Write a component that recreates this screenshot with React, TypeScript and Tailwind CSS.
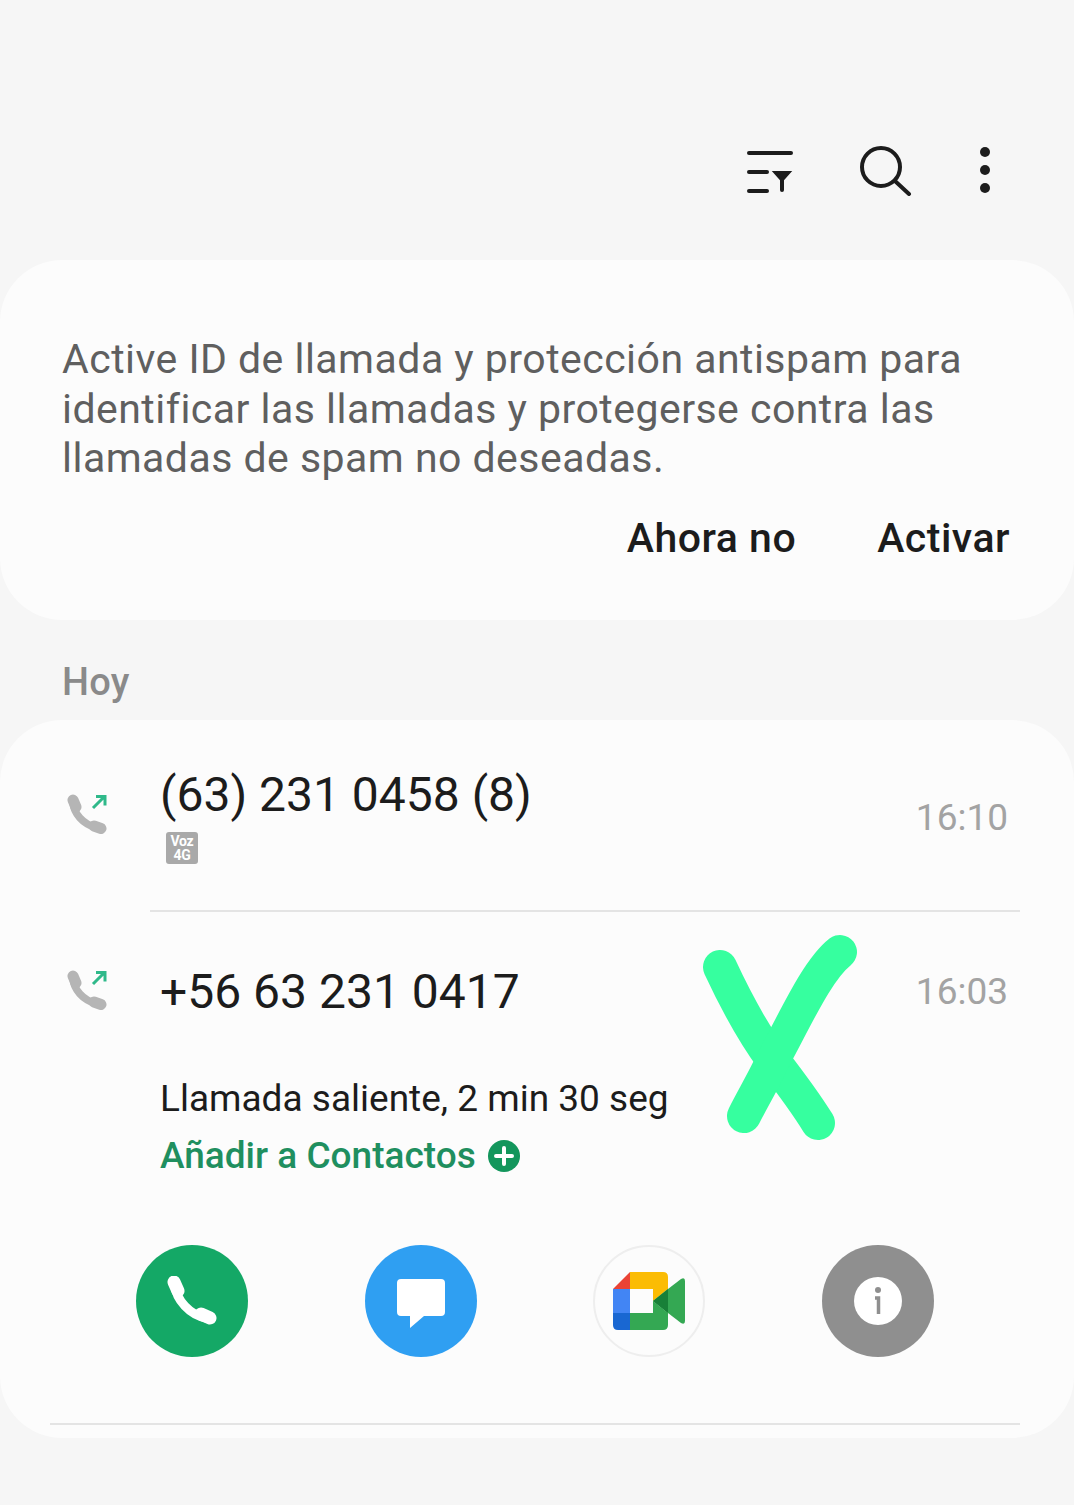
import React from 'react';

function CallOutIcon() {
  return (
    <svg width="42" height="42" viewBox="0 0 42 42" fill="none" className="shrink-0">
      <g stroke="#b5b5b5" strokeLinecap="round">
        <path d="M7 10C8 20 16 31 31 35" strokeWidth="7.500" />
        <path d="M7 7L10 14" strokeWidth="11" />
        <path d="M28 33L35 35.500" strokeWidth="11" />
      </g>
      <path d="M27 15L38 4M30 3.500H39V12.500" stroke="#2fb98a" strokeWidth="3" />
    </svg>
  );
}

function PhoneGlyph() {
  return (
    <svg width="50" height="50" viewBox="0 0 50 50" fill="none" stroke="#fff" strokeLinecap="round">
      <path d="M8 9C9 24 23 39 39 42" strokeWidth="9" />
      <path d="M7 6L11 15" strokeWidth="13" />
      <path d="M34 38L43 42" strokeWidth="13" />
    </svg>
  );
}

function MeetLogo() {
  return (
    <svg width="72" height="58" viewBox="0 0 72 58">
      <path d="M17 0L0 17H17Z" fill="#ea4335" />
      <path d="M0 17H17V41H0Z" fill="#4285f4" />
      <path d="M0 41H17V58H5Q0 58 0 53Z" fill="#1967d2" />
      <path d="M17 41H40V29L55 41V53Q55 58 50 58H17Z" fill="#34a853" />
      <path d="M17 0H50Q55 0 55 5V17L40 29V17H17Z" fill="#fbbc04" />
      <path d="M55 17L68 7Q72 5 72 9V49Q72 53 68 51L55 41L40 29Z" fill="#34a853" />
      <path d="M40 29L55 17V41Z" fill="#188038" />
    </svg>
  );
}

export default function App() {
  return (
    <div className="h-[1505px] w-[1074px] overflow-hidden bg-[#f6f6f6] font-['Roboto',sans-serif]">
      <div className="flex h-[260px] items-start justify-end pt-[146px] pr-[84px]">
        <svg width="46" height="44" viewBox="0 0 46 44" fill="none" stroke="#1c1c1c" strokeWidth="4" strokeLinecap="round" className="mt-[4px] mr-[67px]">
          <path d="M2 3H44" />
          <path d="M2 22H20" />
          <path d="M2 41H20" />
          <path d="M35 26V40" />
          <path d="M27 22H43L35 31Z" fill="#1c1c1c" strokeWidth="2" />
        </svg>
        <svg width="52" height="50" viewBox="0 0 52 50" fill="none" stroke="#1c1c1c" strokeWidth="4" strokeLinecap="round" className="mr-[68px]">
          <circle cx="21" cy="21" r="19" />
          <path d="M35 35L49 48" />
        </svg>
        <div className="mt-[1px] flex h-[46px] flex-col justify-between">
          <div className="size-[10px] rounded-full bg-[#1c1c1c]" />
          <div className="size-[10px] rounded-full bg-[#1c1c1c]" />
          <div className="size-[10px] rounded-full bg-[#1c1c1c]" />
        </div>
      </div>

      <section className="h-[360px] rounded-[62px] bg-[#fcfcfc] pt-[75px] pl-[62px] pr-[64px]">
        <p className="text-[41px] leading-[49.500px] tracking-[0.47px] text-[#5f5f5f]">
          Active ID de llamada y protección antispam para identificar las llamadas y protegerse contra las llamadas de spam no deseadas.
        </p>
        <div className="mt-[31px] flex justify-end gap-[81px] text-[41px] leading-[46px] tracking-[0.5px] font-medium text-[#1c1c1c]">
          <span>Ahora no</span>
          <span>Activar</span>
        </div>
      </section>

      <h2 className="pt-[39px] pl-[62px] text-[38px] leading-[46px] tracking-[0.3px] font-medium text-[#8a8a8a] h-[100px]">Hoy</h2>

      <section className="relative h-[718px] rounded-[62px] bg-[#fcfcfc]">
        <div className="ml-[66px] mr-[66px] flex h-[190px] pt-[47px]">
          <div className="mt-[26px] mr-[52px]"><CallOutIcon /></div>
          <div className="flex-1">
            <div className="text-[48px] leading-[56px] text-[#1c1c1c]">(63) 231 0458 (8)</div>
            <div className="mt-[9px] ml-[6px] flex size-[32px] flex-col items-center justify-center rounded-[3px] bg-[#a9a9a9] text-[14px] leading-[14px] font-bold tracking-[-0.3px] text-white">
              <span>Voz</span>
              <span>4G</span>
            </div>
          </div>
          <div className="mt-[27px] text-[37px] leading-[48px] text-[#a3a3a3]">16:10</div>
        </div>
        <div className="ml-[150px] mr-[54px] h-[2px] bg-[#e4e4e4]" />

        <div className="ml-[66px] mr-[66px] flex pt-[52px]">
          <div className="mt-[5px] mr-[52px]"><CallOutIcon /></div>
          <div className="flex-1 text-[48px] leading-[56px] text-[#1c1c1c]">+56 63 231 0417</div>
          <div className="mt-[4px] text-[37px] leading-[48px] text-[#a3a3a3]">16:03</div>
        </div>

        <div className="mt-[58px] ml-[160px] text-[37px] leading-[42px] text-[#1c1c1c]">Llamada saliente, 2 min 30 seg</div>
        <div className="mt-[15px] ml-[160px] flex items-center gap-[12px] text-[37px] leading-[42px] font-medium text-[#1f8f5f]">
          <span>Añadir a Contactos</span>
          <svg width="32" height="32" viewBox="0 0 32 32">
            <circle cx="16" cy="16" r="16" fill="#13965c" />
            <path d="M16 8V24M8 16H24" stroke="#fff" strokeWidth="4" strokeLinecap="round" />
          </svg>
        </div>

        <div className="mt-[68px] flex justify-between pl-[136px] pr-[140px]">
          <div className="flex size-[112px] items-center justify-center rounded-full bg-[#14a866]">
            <PhoneGlyph />
          </div>
          <div className="flex size-[112px] items-center justify-center rounded-full bg-[#2f9ff2]">
            <svg width="50" height="50" viewBox="0 0 50 50" className="mt-[6px]">
              <path d="M5 0H45Q49 0 49 4V33Q49 37 45 37H28L14 49V37H5Q1 37 1 33V4Q1 0 5 0Z" fill="#fff" />
            </svg>
          </div>
          <div className="flex size-[112px] items-center justify-center rounded-full border-2 border-[#eeeeee]">
            <MeetLogo />
          </div>
          <div className="flex size-[112px] items-center justify-center rounded-full bg-[#8f8f8f]">
            <svg width="48" height="48" viewBox="0 0 48 48">
              <circle cx="24" cy="24" r="24" fill="#fff" />
              <circle cx="24" cy="13" r="3" fill="#8f8f8f" />
              <path d="M21 21H24.500V37" fill="none" stroke="#8f8f8f" strokeWidth="3.500" />
            </svg>
          </div>
        </div>

        <div className="mt-[66px] ml-[50px] mr-[54px] h-[2px] bg-[#e4e4e4]" />

        {/* hand drawn mark on top of the screenshot */}
        <svg width="170" height="220" viewBox="0 0 170 220" fill="none" stroke="#36ff9f" strokeWidth="34" strokeLinecap="round" className="absolute top-[210px] left-[695px]">
          <path d="M25 37C38 65 58 103 78 130C95 152 110 172 123 193" />
          <path d="M145 22C122 40 100 90 78 130C70 148 58 168 49 186" />
        </svg>
      </section>
    </div>
  );
}
